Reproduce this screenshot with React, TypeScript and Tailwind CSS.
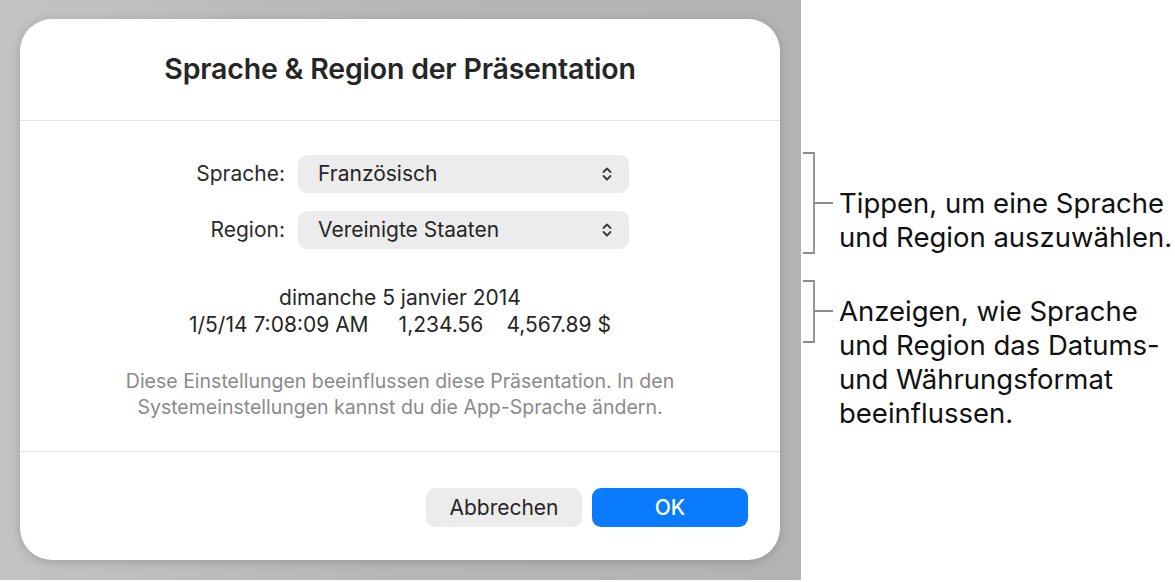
import type { ReactNode } from 'react'

function UpDownIcon() {
  return (
    <svg width="12" height="16" viewBox="0 0 12 16" fill="none" className="shrink-0">
      <path d="M2.5 6 L6 2.5 L9.5 6" stroke="#3a3a3a" strokeWidth="1.8" strokeLinecap="round" strokeLinejoin="round" />
      <path d="M2.5 10 L6 13.5 L9.5 10" stroke="#3a3a3a" strokeWidth="1.8" strokeLinecap="round" strokeLinejoin="round" />
    </svg>
  )
}

function SelectRow({ label, value }: { label: string; value: string }) {
  return (
    <div className="flex items-center">
      <span className="w-[278px] pr-[13px] text-right text-[21px] text-[#2b2b2b]">{label}</span>
      <div className="flex h-[38px] w-[331px] items-center justify-between rounded-[9px] bg-[#ececec] pl-[20px] pr-[16px] text-[21px] text-[#262626]">
        <span>{value}</span>
        <UpDownIcon />
      </div>
    </div>
  )
}

function Bracket({ height, tick }: { height: number; tick: number }) {
  return (
    <svg width="32" height={height} viewBox={`0 0 32 ${height}`} className="shrink-0">
      <path
        d={`M1 1 H12 V${height - 1} H1 M12 ${tick} H31`}
        fill="none"
        stroke="#8d8d8d"
        strokeWidth="1.8"
      />
    </svg>
  )
}

function Note({ children, offset }: { children: ReactNode; offset: number }) {
  return (
    <p style={{ marginTop: offset }} className="pl-[5px] text-[27.5px] leading-[34px] text-[#111]">
      {children}
    </p>
  )
}

export default function App() {
  return (
    <div className="flex h-[582px] w-[1175px] bg-white font-['Inter','Liberation_Sans',sans-serif]">
      <div className="h-[580px] w-[801px] shrink-0 bg-gradient-to-r from-[#c3c3c3] via-[#b6b6b6] to-[#b3b3b3] pl-[20px] pt-[19px]">
        <div className="flex h-[541px] w-[760px] flex-col rounded-[32px] bg-white shadow-[0_2px_10px_rgba(0,0,0,0.18)]">
          <div className="flex h-[102px] items-center justify-center border-b border-[#e4e4e4]">
            <h1 className="text-[28.5px] font-semibold tracking-[-0.2px] text-[#262626]">Sprache &amp; Region der Präsentation</h1>
          </div>

          <div className="flex flex-col gap-[18px] pt-[34px]">
            <SelectRow label="Sprache:" value="Französisch" />
            <SelectRow label="Region:" value="Vereinigte Staaten" />
          </div>

          <div className="mt-[35px] flex flex-col items-center text-[21px] leading-[27px] text-[#262626]">
            <span>dimanche 5 janvier 2014</span>
            <span className="flex">
              <span>1/5/14 7:08:09 AM</span>
              <span className="ml-[30px]">1,234.56</span>
              <span className="ml-[23px]">4,567.89 $</span>
            </span>
          </div>

          <p className="mt-[30px] text-center text-[19.5px] leading-[26px] text-[#8a8a8a]">
            Diese Einstellungen beeinflussen diese Präsentation. In den
            <br />
            Systemeinstellungen kannst du die App-Sprache ändern.
          </p>

          <div className="mt-[31px] border-t border-[#e4e4e4]" />

          <div className="flex justify-end gap-[10px] pr-[32px] pt-[36px]">
            <button className="h-[39px] w-[156px] rounded-[9px] bg-[#ececec] text-[21px] text-[#262626]">Abbrechen</button>
            <button className="h-[39px] w-[156px] rounded-[9px] bg-[#0a7aff] text-[21px] font-medium text-white">OK</button>
          </div>
        </div>
      </div>

      <div className="flex flex-col pl-[1px]">
        <div className="mt-[152px] flex items-start">
          <Bracket height={102} tick={51} />
          <Note offset={34}>
            Tippen, um eine Sprache
            <br />
            und Region auszuwählen.
          </Note>
        </div>
        <div className="mt-[26px] flex items-start">
          <Bracket height={63} tick={31} />
          <Note offset={14}>
            Anzeigen, wie Sprache
            <br />
            und Region das Datums-
            <br />
            und Währungsformat
            <br />
            beeinflussen.
          </Note>
        </div>
      </div>
    </div>
  )
}
